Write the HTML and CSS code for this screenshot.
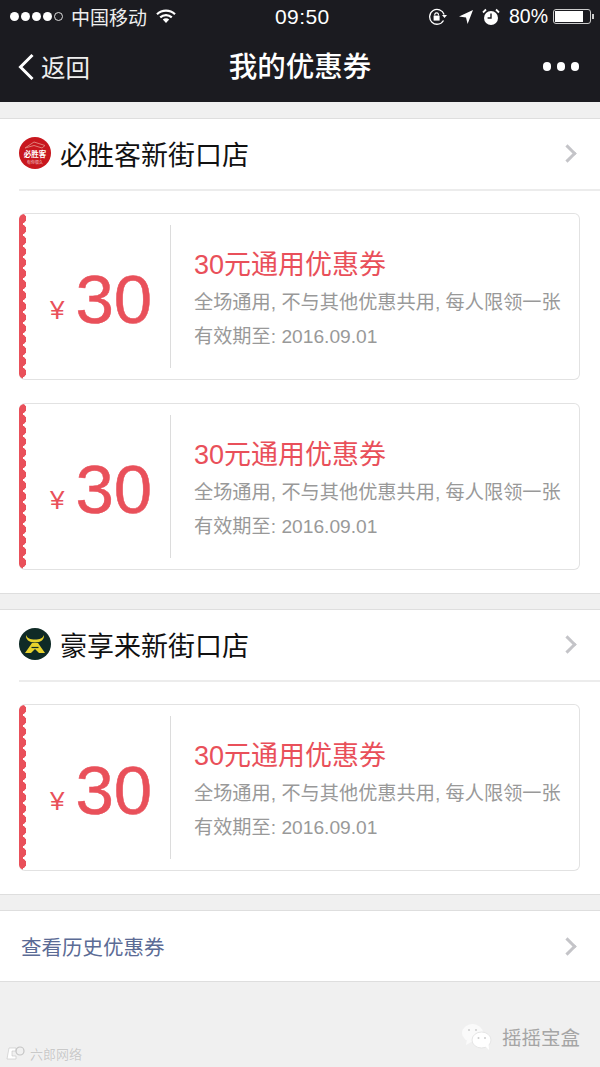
FILE: index.html
```html
<!DOCTYPE html>
<html>
<head>
    <meta charset="utf-8">
    <title>我的优惠券</title>
    <link rel="stylesheet" href="styles.css">
</head>
<body>
<div id="wrapper">
    <div class="top">
        <div class="status">
            <div class="status-left">
                <span class="dots"><i></i><i></i><i></i><i></i><i class="empty"></i></span>
                <span class="carrier">中国移动</span>
                <svg class="wifi" width="20" height="15" viewBox="0 0 20 15"><path d="M1 5.2a13 13 0 0 1 18 0" fill="none" stroke="#fff" stroke-width="2.2"/><path d="M4.2 8.4a8.6 8.6 0 0 1 11.6 0" fill="none" stroke="#fff" stroke-width="2.2"/><path d="M6.8 10.6a4.6 4.6 0 0 1 6.4 0L10 14z" fill="#fff"/></svg>
            </div>
            <div class="clock">09:50</div>
            <div class="status-right">
                <svg width="20" height="18" viewBox="0 0 20 18"><path d="M15.5 12.5a7.4 7.4 0 1 1 .6-6" fill="none" stroke="#fff" stroke-width="1.3"/><path d="M14 7h5l-2.5 3z" fill="#fff"/><rect x="5.6" y="7.6" width="6" height="5" fill="#fff"/><path d="M6.8 7.6V6a2 2 0 0 1 3.6 0v1.6" fill="none" stroke="#fff" stroke-width="1.1"/></svg>
                <svg class="arrow" width="16" height="16" viewBox="0 0 16 16"><path d="M15 1 1 7.4l7 1 1.6 6.6z" fill="#fff"/></svg>
                <svg width="18" height="18" viewBox="0 0 18 18"><circle cx="9" cy="10" r="7" fill="#fff"/><path d="M9 5.5V10H5.6" fill="none" stroke="#1b1b20" stroke-width="1.4"/><path d="M1 4.5 4 1.5M17 4.5l-3-3" stroke="#fff" stroke-width="1.8"/></svg>
                <span class="pct">80%</span>
                <span class="battery"><span class="charge"></span></span>
            </div>
        </div>
        <div class="nav">
            <div class="back">
                <svg width="18" height="28" viewBox="0 0 18 28"><path d="M15.5 2 3.5 14l12 12" fill="none" stroke="#fff" stroke-width="3"/></svg>
                <span>返回</span>
            </div>
            <div class="title">我的优惠券</div>
            <div class="more"><i></i><i></i><i></i></div>
        </div>
    </div>

    <div class="group first">
        <div class="shop">
            <svg class="logo" width="32" height="32" viewBox="0 0 32 32">
                <circle cx="16" cy="16" r="16" fill="#c8171e"/>
                <path d="M6 11 15 5l11 3.500-3 2.500-8-2.500z" fill="none" stroke="#e07f78" stroke-width="1"/>
                <text x="16" y="20" class="logo-text">必胜客</text>
                <text x="16" y="27" class="logo-sub">有你很久</text>
            </svg>
            <span class="shop-name">必胜客新街口店</span>
            <span class="chevron"></span>
        </div>
        <div class="coupons">
            <div class="coupon">
                <div class="edge"></div>
                <div class="price"><span class="yen">¥</span><span class="num">30</span></div>
                <div class="info">
                    <div class="name">30元通用优惠券</div>
                    <div class="rule">全场通用, 不与其他优惠共用, 每人限领一张</div>
                    <div class="rule">有效期至: 2016.09.01</div>
                </div>
            </div>
            <div class="coupon">
                <div class="edge"></div>
                <div class="price"><span class="yen">¥</span><span class="num">30</span></div>
                <div class="info">
                    <div class="name">30元通用优惠券</div>
                    <div class="rule">全场通用, 不与其他优惠共用, 每人限领一张</div>
                    <div class="rule">有效期至: 2016.09.01</div>
                </div>
            </div>
        </div>
    </div>

    <div class="group">
        <div class="shop">
            <svg class="logo" width="32" height="32" viewBox="0 0 32 32">
                <circle cx="16" cy="16" r="16" fill="#0f2a26"/>
                <path d="M7 7c1.500 3.500 4 4.500 9 4.500S23.500 10.500 25 7c.5 4.500-3 7.500-9 7.500S6.500 11.500 7 7z" fill="#e8d22c"/>
                <path d="M13 15h6l7 10h-6l-4-4-4 4H6z" fill="#e8d22c"/>
                <path d="M12.500 19.500h7" stroke="#0f2a26" stroke-width="1.200"/>
            </svg>
            <span class="shop-name">豪享来新街口店</span>
            <span class="chevron"></span>
        </div>
        <div class="coupons">
            <div class="coupon">
                <div class="edge"></div>
                <div class="price"><span class="yen">¥</span><span class="num">30</span></div>
                <div class="info">
                    <div class="name">30元通用优惠券</div>
                    <div class="rule">全场通用, 不与其他优惠共用, 每人限领一张</div>
                    <div class="rule">有效期至: 2016.09.01</div>
                </div>
            </div>
        </div>
    </div>

    <div class="group history">
        <span>查看历史优惠券</span>
        <span class="chevron"></span>
    </div>

    <div class="foot">
        <div class="mark-left">
            <svg width="20" height="15" viewBox="0 0 20 15"><path d="M3 2h7v3H6v5h4v3H1z" fill="#fff" stroke="#c4c4c4" stroke-width=".6"/><circle cx="14" cy="5" r="4" fill="none" stroke="#c4c4c4" stroke-width="1.2"/></svg>
            <span>六郎网络</span>
        </div>
        <div class="mark-right">
            <svg width="32" height="28" viewBox="0 0 32 28">
                <ellipse cx="11.500" cy="10" rx="10.500" ry="9" fill="#fafafa"/>
                <path d="M6 16l-1 6 7-4z" fill="#fafafa"/>
                <ellipse cx="20.500" cy="17" rx="9.500" ry="8" fill="#fff" stroke="#e6e6e6"/>
                <path d="M24 23l4 4-.5-6z" fill="#fff"/>
                <circle cx="8" cy="7" r="1" fill="#ccc"/><circle cx="15" cy="7" r="1" fill="#ccc"/>
                <circle cx="17.500" cy="15" r="1" fill="#ccc"/><circle cx="24" cy="15" r="1" fill="#ccc"/>
            </svg>
            <span>摇摇宝盒</span>
        </div>
    </div>
</div>
</body>
</html>
```

FILE: styles.css
```css
*{box-sizing: border-box;}
body,div,span,i{margin: 0;padding: 0;}
body{background: #f0f0f0;font-family: "Liberation Sans","Noto Sans CJK SC",sans-serif;color: #111;}
i{display: block;}

#wrapper{width: 600px;height: 1067px;overflow: hidden;position: relative;}

/* top bar */
.top{height: 102px;background: #1b1b20;color: #fff;}
.status{height: 33px;display: flex;align-items: center;justify-content: space-between;padding: 0 9px 0 10px;position: relative;}
.status-left,.status-right{display: flex;align-items: center;}
.dots{display: flex;gap: 2px;margin-right: 6px;}
.dots i{width: 9px;height: 9px;border-radius: 50%;background: #fff;}
.dots .empty{background: none;border: 1px solid #ddd;}
.carrier{font-size: 19px;margin: 0 9px 0 2px;color: #eee;}
.clock{position: absolute;left: 275px;top: 3px;font-size: 21px;line-height: 27px;letter-spacing: .4px;}
.status-right{gap: 8px;}
.arrow{margin-left: 2px;}
.pct{font-size: 19.500px;margin-left: 1px;}
.battery{width: 38px;height: 15px;border: 1px solid #ccc;border-radius: 3px;padding: 1px;position: relative;margin-left: -3px;}
.battery:after{content: "";position: absolute;right: -4px;top: 4px;width: 2px;height: 5px;background: #ccc;}
.charge{display: block;width: 28px;height: 11px;background: #fff;}

.nav{height: 69px;display: flex;align-items: center;justify-content: space-between;padding: 0 21px 2px 17px;position: relative;}
.back{display: flex;align-items: center;gap: 6px;font-size: 24.500px;color: #eee;}
.title{position: absolute;left: 0;right: 0;top: 14px;text-align: center;font-size: 28.500px;line-height: 40px;font-weight: 500;}
.more{display: flex;gap: 5.500px;}
.more i{width: 8.500px;height: 8.500px;border-radius: 50%;background: #fff;}

/* shop groups */
.group{background: #fff;border-top: 1px solid #dedede;border-bottom: 1px solid #dedede;margin-bottom: 15px;}
.first{margin-top: 16px;}
.shop{height: 72px;margin-left: 19px;padding: 0 26px 2px 0;display: flex;align-items: center;border-bottom: 2px solid #ececec;}
.logo{flex: none;margin-right: 9px;}
.logo-text{font-size: 7.500px;fill: #fff;text-anchor: middle;font-weight: 700;}
.logo-sub{font-size: 4px;fill: #f4c6c6;text-anchor: middle;}
.shop-name{font-size: 27px;flex: 1;}
.chevron{display: block;width: 13px;height: 13px;border-top: 3px solid #c4c4c8;border-right: 3px solid #c4c4c8;transform: rotate(45deg);flex: none;}

/* coupons */
.coupons{padding: 22px 20px 23px 19px;display: flex;flex-direction: column;gap: 23px;}
.coupon{height: 167px;display: flex;align-items: center;background: #fff;border: 1px solid #e2e2e2;border-left: 0;border-radius: 6px;overflow: hidden;}
.edge{flex: none;width: 8px;align-self: stretch;margin: -1px 0;border-radius: 5px 0 0 5px;
    background:
        linear-gradient(#e9505a,#e9505a) left top/4px 100% no-repeat,
        radial-gradient(circle at 2px 5.500px,#e9505a 5px,transparent 5.500px) left top/8px 11px repeat-y;}
.price{flex: none;width: 144px;height: 143px;border-right: 1px solid #dcdcdc;display: flex;align-items: center;padding: 5px 0 0 23px;color: #e9505a;}
.yen{font-size: 26px;margin: 23px 9px 0 0;}
.num{font-size: 69px;line-height: 1;margin-left: 2px;-webkit-text-stroke: .5px #e9505a;}
.info{padding: 7px 0 0 23px;}
.name{font-size: 27px;line-height: 36px;color: #e9505a;margin-bottom: 3px;}
.rule{font-size: 19.200px;line-height: 34px;color: #999;white-space: nowrap;}

/* history link */
.history{height: 72px;margin: 0;padding: 0 26px 0 21px;display: flex;align-items: center;justify-content: space-between;font-size: 20.500px;color: #5b6b95;}

/* marks in the bottom corners */
.foot{position: absolute;left: 0;right: 0;bottom: 0;height: 50px;}
.mark-left{position: absolute;left: 6px;bottom: 4px;display: flex;align-items: center;gap: 4px;font-size: 13px;color: #c9c9c9;text-shadow: 0 0 1px #fff;}
.mark-right{position: absolute;right: 20px;bottom: 16px;display: flex;align-items: center;gap: 9px;font-size: 19.500px;color: #a5a5a5;}
```
